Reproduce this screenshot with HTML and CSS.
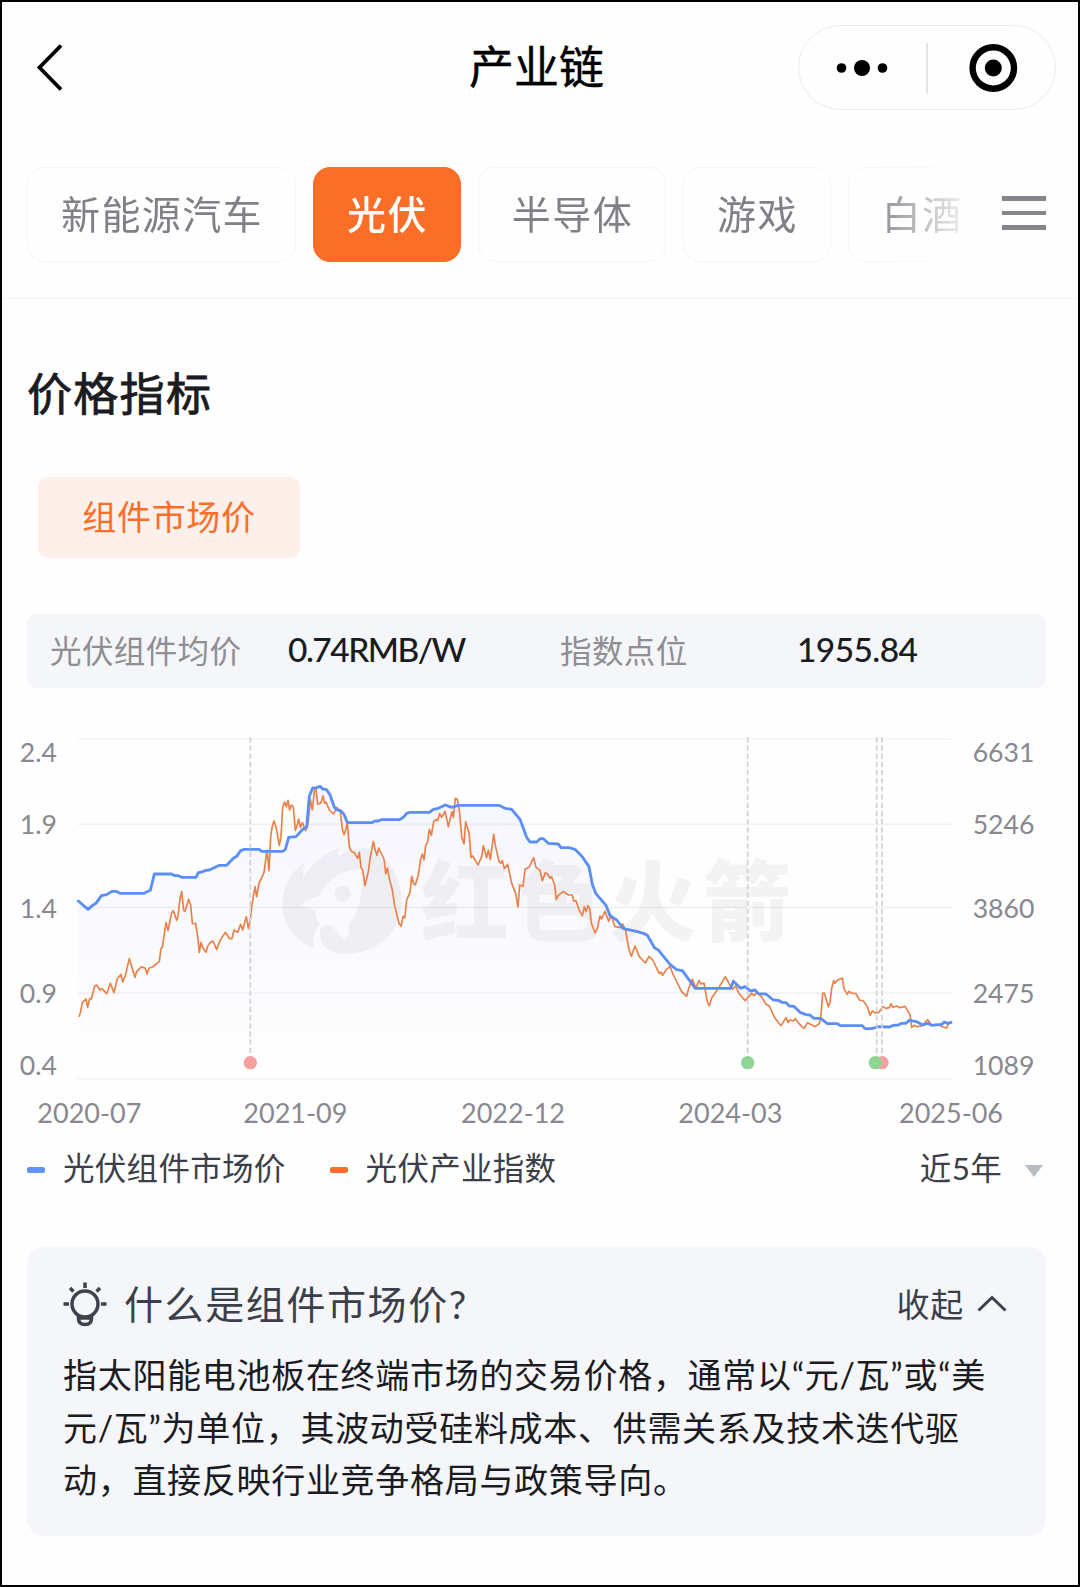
FILE: index.html
```html
<!DOCTYPE html>
<html lang="zh-CN">
<head>
    <meta charset="UTF-8">
    <meta name="viewport" content="width=device-width, initial-scale=1.0">
    <title>产业链</title>
    <link rel="stylesheet" href="styles.css">
</head>
<body>
    <div class="page">
        <header class="header">
            <svg class="back" width="30" height="50" viewBox="0 0 30 50">
                <path d="M26 2.500L4.500 24.500L26 46.500" fill="none" stroke="#000" stroke-width="3.800"/>
            </svg>
            <h1 class="title">产业链</h1>
            <div class="capsule">
                <svg width="256" height="83" viewBox="0 0 256 83">
                    <circle cx="42.500" cy="42" r="4.800"/>
                    <circle cx="63" cy="42" r="8"/>
                    <circle cx="83.500" cy="42" r="4.800"/>
                    <path d="M128 17V68" stroke="#e4e4e4" stroke-width="2"/>
                    <circle cx="194.300" cy="42" r="20.700" fill="none" stroke="#000" stroke-width="6.400"/>
                    <circle cx="194.300" cy="42" r="8.500"/>
                </svg>
            </div>
        </header>

        <nav class="tabs">
            <div class="tab-list">
                <span class="tab">新能源汽车</span>
                <span class="tab active">光伏</span>
                <span class="tab">半导体</span>
                <span class="tab">游戏</span>
                <span class="tab">白酒</span>
            </div>
            <div class="menu"><i></i><i></i><i></i></div>
        </nav>

        <main class="content">
            <h2 class="section-title">价格指标</h2>
            <span class="tag">组件市场价</span>

            <div class="stats">
                <span class="stat-label">光伏组件均价</span>
                <span class="stat-value price">0.74RMB/W</span>
                <span class="stat-label">指数点位</span>
                <span class="stat-value">1955.84</span>
            </div>
        </main>

        <svg class="chart" viewBox="-174 0 3228 1245">
            <defs>
                <linearGradient id="area" x1="0" y1="0" x2="0" y2="1">
                    <stop offset="0" stop-color="#6b7cff" stop-opacity="0.055"/>
                    <stop offset="0.5" stop-color="#6b7cff" stop-opacity="0.03"/>
                    <stop offset="1" stop-color="#6b7cff" stop-opacity="0"/>
                </linearGradient>
            </defs>
            <path class="grid" d="M55 57H2673M55 313H2673M55 562H2673M55 819H2673M55 1077H2673"/>
            <polygon fill="url(#area)" points="55,1077 55,543 84,568 124,527 156,514 180,520 252,520 271,511 283,462 335,462 365,472 408,472 415,458 448,450 478,436 500,436 542,392 552,388 597,388 605,394 668,394 676,388 686,352 708,350 740,322 748,228 758,204 780,199 800,209 823,262 842,272 862,308 935,308 963,299 1018,299 1050,277 1108,277 1156,255 1175,262 1195,256 1317,256 1355,268 1380,298 1410,366 1430,366 1450,356 1465,370 1495,372 1503,383 1545,388 1565,408 1587,440 1597,493 1607,520 1638,556 1650,587 1690,626 1750,640 1784,684 1830,733 1867,752 1905,805 2012,805 2020,784 2042,805 2095,821 2118,822 2202,859 2262,895 2302,911 2407,917 2415,926 2488,921 2548,901 2588,915 2673,907 2673,1077"/>
            <g class="watermark">
                <path transform="translate(630 330)" d="M130 357C70 325 38 280 38 225C38 170 60 125 105 95C98 115 97 132 99 147C120 105 160 70 210 53C203 65 201 72 204 80C230 62 260 53 285 55C355 78 395 140 395 215C395 305 320 372 225 372C170 372 143 340 152 290C165 285 180 285 190 292Q208 318 228 330Q240 310 238 280C268 245 280 190 278 118C225 118 175 140 148 198Q120 205 88 226Q120 233 135 245Q137 270 149 284C130 305 128 335 130 357ZM242 192A24 24 0 1 0 194 192A24 24 0 1 0 242 192Z"/>
                <text x="1083" y="643">红色火箭</text>
            </g>
            <polyline class="line-index" points="57,890 61,878 67,848 78,837 83,862 89,836 94,837 104,798 110,795 120,810 126,806 140,821 151,790 162,818 172,776 183,763 188,786 196,766 208,716 225,772 230,754 245,740 256,745 261,762 267,744 278,741 298,724 303,685 307,682 318,608 324,632 335,578 340,572 350,601 354,588 360,535 365,515 371,571 375,574 386,538 392,555 397,610 407,611 413,650 418,697 423,667 429,685 438,697 443,679 450,668 459,663 470,688 480,662 496,637 509,656 516,656 522,630 533,637 542,613 548,630 559,590 565,625 571,600 575,560 585,500 590,530 597,490 612,458 621,390 627,452 632,350 637,318 642,303 649,325 658,377 663,350 668,262 674,246 679,260 684,241 689,270 694,255 700,261 706,331 711,318 716,297 721,322 727,308 737,332 744,310 751,238 757,270 764,205 768,207 773,253 783,248 789,227 794,250 798,246 808,270 821,282 831,262 841,275 847,328 852,344 857,330 862,308 868,380 873,393 883,398 893,415 898,397 903,442 908,450 915,497 925,455 930,417 940,364 945,388 951,406 956,384 972,417 977,461 982,444 988,475 997,510 1004,557 1017,610 1023,619 1029,589 1034,594 1040,540 1050,517 1055,469 1061,492 1066,494 1075,465 1082,417 1087,402 1092,420 1097,377 1103,365 1108,328 1114,346 1121,305 1128,299 1133,302 1139,280 1145,292 1155,274 1160,296 1165,320 1171,295 1176,275 1180,292 1186,235 1192,238 1198,270 1205,350 1212,372 1217,305 1227,338 1233,412 1238,408 1254,435 1265,410 1270,377 1280,413 1285,390 1291,419 1301,342 1306,376 1317,424 1322,430 1327,422 1333,446 1343,433 1355,490 1367,520 1374,561 1379,495 1389,499 1395,448 1407,442 1421,413 1428,442 1440,451 1447,483 1456,458 1463,462 1470,475 1475,470 1484,495 1489,538 1495,526 1510,514 1525,525 1536,525 1542,544 1548,542 1558,572 1567,587 1573,560 1578,575 1584,557 1589,565 1594,609 1605,639 1612,625 1620,588 1625,597 1635,574 1646,604 1653,585 1665,620 1682,623 1688,612 1697,632 1707,690 1714,709 1725,678 1738,710 1756,729 1767,709 1778,720 1798,761 1803,756 1808,766 1819,748 1830,740 1840,765 1865,815 1880,829 1886,805 1897,778 1908,804 1917,781 1923,792 1932,789 1942,845 1948,858 1955,834 1975,805 1996,770 2017,808 2027,798 2037,820 2055,842 2075,820 2082,827 2090,818 2105,831 2118,853 2128,858 2145,895 2163,917 2178,893 2184,907 2190,900 2200,903 2206,896 2220,914 2232,925 2243,908 2265,920 2278,911 2283,885 2288,820 2293,819 2305,860 2310,847 2315,805 2321,782 2325,790 2332,781 2347,774 2352,806 2362,823 2367,814 2374,819 2388,821 2398,840 2410,843 2422,860 2430,886 2437,873 2447,879 2457,877 2468,859 2477,865 2488,863 2493,851 2499,862 2510,858 2520,863 2535,859 2550,883 2555,922 2562,916 2572,920 2585,918 2603,899 2615,915 2632,913 2655,923 2660,924 2666,910 2673,908"/>
            <polyline class="line-price" points="55,543 84,568 98,556 108,550 124,527 140,524 156,514 168,514 180,520 252,520 271,511 283,462 335,462 345,467 355,467 365,472 408,472 415,458 425,456 437,451 448,450 478,436 500,436 520,415 530,409 542,392 552,388 597,388 605,394 668,394 676,388 686,352 708,350 728,328 740,322 748,228 758,204 770,203 780,199 788,207 800,209 810,224 823,262 832,270 842,272 852,283 862,308 935,308 945,303 955,303 963,299 1018,299 1030,292 1040,280 1050,277 1108,277 1120,268 1135,265 1156,255 1175,262 1195,256 1317,256 1335,265 1355,268 1380,298 1400,352 1410,366 1430,366 1440,356 1450,356 1465,370 1495,372 1503,383 1527,383 1545,388 1565,408 1587,440 1597,493 1607,520 1638,556 1650,587 1670,600 1690,626 1730,634 1750,640 1762,646 1784,684 1794,689 1830,733 1850,749 1867,752 1895,790 1905,805 2012,805 2020,784 2042,805 2055,800 2072,813 2085,810 2095,821 2118,822 2140,840 2155,841 2165,847 2178,848 2188,858 2202,859 2220,877 2238,884 2250,885 2262,895 2282,895 2302,911 2332,911 2342,917 2407,917 2415,926 2435,926 2455,920 2488,921 2500,916 2515,915 2525,910 2537,910 2548,901 2570,905 2588,915 2603,910 2615,916 2645,913 2653,906 2663,910 2673,907"/>
            <path class="marker-line" d="M571 52V1010M2063 52V1010M2450 52V1010M2466 52V1010"/>
            <circle class="down" cx="571" cy="1028" r="20"/>
            <circle class="up" cx="2063" cy="1028" r="20"/>
            <circle class="down" cx="2466" cy="1028" r="20"/>
            <circle class="up" cx="2446" cy="1028" r="20"/>
            <g class="axis">
                <text x="-121" y="127">2.4</text>
                <text x="-121" y="341">1.9</text>
                <text x="-121" y="593">1.4</text>
                <text x="-121" y="848">0.9</text>
                <text x="-121" y="1064">0.4</text>
                <text x="2738" y="127">6631</text>
                <text x="2738" y="341">5246</text>
                <text x="2738" y="593">3860</text>
                <text x="2738" y="848">2475</text>
                <text x="2738" y="1064">1089</text>
            </g>
            <g class="axis dates">
                <text x="88" y="1208">2020-07</text>
                <text x="706" y="1208">2021-09</text>
                <text x="1359" y="1208">2022-12</text>
                <text x="2011" y="1208">2024-03</text>
                <text x="2673" y="1208">2025-06</text>
            </g>
        </svg>

        <div class="legend">
            <i class="dash blue"></i><span>光伏组件市场价</span>
            <i class="dash orange"></i><span>光伏产业指数</span>
            <div class="range">近5年<i class="arrow"></i></div>
        </div>

        <section class="card">
            <div class="card-head">
                <svg class="bulb" width="44" height="46" viewBox="0 0 44 46" fill="none" stroke="#3f424c" stroke-width="3.500">
                    <circle cx="22" cy="23" r="13"/>
                    <path d="M15.500 34.500V37.500Q15.500 43.500 22 43.500T28.500 37.500V34.500M16 37H28"/>
                    <path d="M22 1.500V7M7 7L10.500 10.500M37 7L33.500 10.500M0.500 23H6M38 23H43.500"/>
                </svg>
                <h3>什么是组件市场价?</h3>
                <span class="fold">收起</span>
                <svg width="30" height="18" viewBox="0 0 30 18">
                    <path d="M1.500 15.500L15 2.500L28.500 15.500" fill="none" stroke="#3f424c" stroke-width="3"/>
                </svg>
            </div>
            <p>指太阳能电池板在终端市场的交易价格，通常以“元/瓦”或“美<br>元/瓦”为单位，其波动受硅料成本、供需关系及技术迭代驱<br>动，直接反映行业竞争格局与政策导向。</p>
        </section>
    </div>
</body>
</html>
```
FILE: styles.css
```css
* {
    box-sizing: border-box;
}
body {
    margin: 0;
    font-family: Lato, 'Noto Sans CJK SC', sans-serif;
    background: #fff;
    color: #1b1b22;
}
h1, h2, h3, p {
    margin: 0;
    font-weight: 400;
}
.page {
    width: 1080px;
    height: 1587px;
    border: 2px solid #000;
    background: #fefefe;
    overflow: hidden;
}
.header {
    display: grid;
    grid-template-columns: 1fr auto 1fr;
    align-items: center;
    height: 131px;
    padding: 0 22px 0 33px;
}
.title {
    font-size: 45px;
    line-height: 60px;
    color: #000;
    margin: 0 18px 2px 0;
    -webkit-text-stroke: 0.400px #000;
}
.capsule {
    justify-self: end;
    width: 258px;
    height: 85px;
    border: 1.500px solid #ebebeb;
    border-radius: 43px;
}
.capsule svg {
    display: block;
}
.tabs {
    display: flex;
    align-items: center;
    height: 166px;
    padding: 0 32px 2px 25px;
    border-bottom: 1px solid #f3f3f4;
}
.tab-list {
    display: flex;
    gap: 17px;
    width: 970px;
    -webkit-mask-image: linear-gradient(to right, #000 840px, transparent 950px);
    mask-image: linear-gradient(to right, #000 840px, transparent 950px);
}
.tab {
    flex: none;
    height: 95px;
    padding: 0 32px 0 33px;
    border: 1px solid #f4f4f5;
    border-radius: 17px;
    font-size: 39px;
    letter-spacing: 1.400px;
    line-height: 92px;
    color: #808087;
}
.tab.active {
    background: #fa6e28;
    border-color: #fa6e28;
    color: #fff;
    font-weight: 500;
}
.menu {
    display: flex;
    flex-direction: column;
    gap: 10px;
    width: 44px;
    margin-left: auto;
    margin-bottom: 3px;
}
.menu i {
    height: 4.700px;
    background: #85858c;
}
.content {
    padding: 65px 32px 0 25px;
}
.section-title {
    font-size: 45px;
    letter-spacing: 1.300px;
    line-height: 60px;
    -webkit-text-stroke: 0.800px #1b1b22;
}
.tag {
    display: block;
    width: 262px;
    height: 81px;
    margin: 53px 0 56px 11px;
    border-radius: 10px;
    background: #fdefea;
    color: #fa6e28;
    font-size: 34px;
    letter-spacing: 0.700px;
    line-height: 79px;
    text-align: center;
}
.stats {
    display: grid;
    grid-template-columns: 238px 272px 237px 1fr;
    align-items: center;
    height: 74px;
    padding: 0 0 4px 23px;
    border-radius: 10px;
    background: #f5f6f9;
}
.stat-label {
    font-size: 31.500px;
    letter-spacing: 0.400px;
    color: #8e8e93;
}
.stat-value {
    font-size: 33.500px;
    font-weight: 500;
    letter-spacing: -0.600px;
}
.price {
    letter-spacing: -1.500px;
}
.chart {
    display: block;
    width: 1076px;
    height: 415px;
    margin-top: 32px;
}
.grid {
    stroke: #f1f1f3;
    stroke-width: 5;
}
.watermark {
    fill: rgba(40, 40, 40, 0.052);
}
.watermark path {
    fill-rule: evenodd;
}
.watermark text {
    font-family: 'Noto Sans CJK SC', sans-serif;
    font-size: 264px;
    font-weight: 900;
    letter-spacing: 18px;
}
.line-index, .line-price {
    fill: none;
    stroke-linejoin: round;
}
.line-index {
    stroke: #ea8048;
    stroke-width: 5;
}
.line-price {
    stroke: #5b8ff5;
    stroke-width: 8.500;
    stroke-linecap: round;
}
.marker-line {
    stroke: #cfd0d4;
    stroke-width: 5;
    stroke-dasharray: 16 8.500;
}
.down {
    fill: #f4a09c;
}
.up {
    fill: #8fd694;
}
.axis {
    fill: #88888e;
    font-size: 80px;
}
.dates {
    text-anchor: middle;
    font-size: 81px;
}
.legend {
    display: flex;
    align-items: center;
    height: 40px;
    margin-top: 13px;
    padding: 0 35px 0 25px;
    font-size: 31.500px;
    letter-spacing: 0.300px;
    line-height: 40px;
    color: #3c3f49;
}
.dash {
    width: 18px;
    height: 6px;
    margin: 3px 18px 0 0;
    border-radius: 2px;
}
.blue {
    background: #5f93ff;
}
.orange {
    background: #fa6e28;
    margin-left: 44px;
}
.range {
    display: flex;
    align-items: center;
    margin-left: auto;
}
.arrow {
    margin: 6px 0 0 23px;
    border: 9px solid transparent;
    border-top: 12px solid #b8bdc3;
    border-bottom: 0;
}
.card {
    height: 289px;
    margin: 59px 32px 0 25px;
    padding: 31px 39px 0 36px;
    border-radius: 17px;
    background: #f5f6f9;
}
.card-head {
    display: flex;
    align-items: center;
    height: 52px;
    color: #3c3f49;
}
.card h3 {
    margin-left: 17px;
    font-size: 39px;
    letter-spacing: 1.600px;
    line-height: 52px;
}
.fold {
    margin-left: auto;
    margin-right: 13px;
    padding-bottom: 2px;
    font-size: 33px;
    letter-spacing: 0.700px;
}
.card p {
    margin-top: 19px;
    font-size: 34px;
    letter-spacing: 0.700px;
    line-height: 52.500px;
    white-space: nowrap;
}
```
